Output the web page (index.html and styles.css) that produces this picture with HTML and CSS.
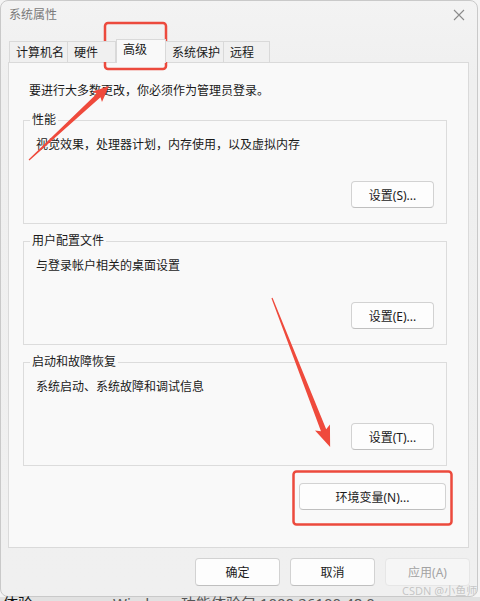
FILE: index.html
```html
<!DOCTYPE html>
<html lang="zh-CN">
<head>
  <meta charset="UTF-8">
  <title>系统属性</title>
  <link rel="stylesheet" href="styles.css">
</head>
<body>
  <div class="window">
    <div class="titlebar">
      <span class="title">系统属性</span>
      <svg class="close" width="12" height="12" viewBox="0 0 12 12">
        <path d="M1 1 L11 11 M11 1 L1 11" stroke="#8a8a8a" stroke-width="1.1" fill="none"/>
      </svg>
    </div>

    <div class="tabs">
      <div class="tab w59">计算机名</div>
      <div class="tab w48">硬件</div>
      <div class="tab active w50">高级</div>
      <div class="tab w58">系统保护</div>
      <div class="tab w46">远程</div>
    </div>

    <div class="panel">
      <p class="intro">要进行大多数更改，你必须作为管理员登录。</p>

      <fieldset class="group">
        <legend>性能</legend>
        <p>视觉效果，处理器计划，内存使用，以及虚拟内存</p>
        <div class="row"><button class="btn">设置(S)...</button></div>
      </fieldset>

      <fieldset class="group">
        <legend>用户配置文件</legend>
        <p>与登录帐户相关的桌面设置</p>
        <div class="row"><button class="btn">设置(E)...</button></div>
      </fieldset>

      <fieldset class="group">
        <legend>启动和故障恢复</legend>
        <p>系统启动、系统故障和调试信息</p>
        <div class="row"><button class="btn">设置(T)...</button></div>
      </fieldset>

      <div class="row env"><button class="btn wide">环境变量(N)...</button></div>
    </div>

    <div class="actions">
      <button class="btn action">确定</button>
      <button class="btn action">取消</button>
      <button class="btn action" disabled>应用(A)</button>
    </div>

    <span class="watermark">CSDN @小鱼师傅</span>
  </div>

  <div class="behind">
    <span class="behind-label">体验</span>
    <span class="behind-value">Windows 功能体验包 1000.26100.48.0</span>
  </div>

  <!-- annotations drawn over the screenshot -->
  <svg class="marks" width="480" height="601" viewBox="0 0 480 601">
    <rect x="105" y="23" width="61" height="46" rx="3" fill="none" stroke="#ec4a3d" stroke-width="2.5"/>
    <rect x="293.5" y="471.5" width="158" height="53" rx="3" fill="none" stroke="#ec4a3d" stroke-width="2.5"/>
    <g transform="translate(29 160) rotate(-42.8)" fill="#ef4a3c">
      <polygon points="0,-0.6 95,-2.6 93,-7 109,0 93,7 95,2.6 0,0.6"/>
    </g>
    <g transform="translate(272 298) rotate(68.7)" fill="#ef4a3c">
      <polygon points="0,-0.6 142,-2.8 139,-8 160,0 139,8 142,2.8 0,0.6"/>
    </g>
  </svg>
</body>
</html>
```

FILE: styles.css
```css
body {
  margin: 0;
  width: 480px;
  height: 601px;
  overflow: hidden;
  position: relative;
  background: #f4f4f4;
  font-family: 'Noto Sans', 'Noto Sans CJK SC', sans-serif;
  font-size: 12px;
  color: #1a1a1a;
}

.window {
  position: relative;
  width: 478px;
  height: 597px;
  box-sizing: border-box;
  border: 1px solid #c9c9c9;
  border-radius: 8px;
  background: linear-gradient(#f3f3f3, #efefef 80px, #f0f0f0);
  overflow: hidden;
}

.titlebar {
  height: 38px;
  display: flex;
  justify-content: space-between;
  padding: 6px 12px 0 8px;
  box-sizing: border-box;
}

.title {
  line-height: 16px;
  color: #7a7a7a;
}

.close {
  margin-top: 2px;
}

.tabs {
  display: flex;
  align-items: flex-start;
  height: 24px;
  margin-bottom: -1px;
  padding-left: 8px;
  position: relative;
  z-index: 1;
}

.tab {
  height: 21px;
  margin-top: 2px;
  box-sizing: border-box;
  border: 1px solid #d9d9d9;
  border-bottom: none;
  background: #f0f0f0;
  padding-left: 6px;
  line-height: 21px;
  white-space: nowrap;
}

.tab + .tab {
  border-left: none;
}

.tab.active {
  height: 24px;
  margin-top: 0;
  background: #f9f9f9;
  border-left: 1px solid #d9d9d9;
  line-height: 20px;
  padding-left: 6px;
}

.w59 { width: 59px; }
.w48 { width: 48px; }
.w50 { width: 50px; }
.w58 { width: 58px; }
.w46 { width: 46px; }

.panel {
  margin: 0 8px 0 7px;
  border: 1px solid #dadada;
  background: #f9f9f9;
  padding: 20px 21px 37px 14px;
}

.intro {
  margin: 0 0 13px 6px;
  line-height: 16px;
}

.group {
  margin: 0 0 9px 0;
  padding: 9px 12px 15px 6px;
  border: 1px solid #dcdcdc;
  min-width: 0;
}

.group legend {
  padding: 0 2px;
  line-height: 16px;
}

.group p {
  margin: 0 0 28px 6px;
  line-height: 16px;
}

.row {
  display: flex;
  justify-content: flex-end;
}

.btn {
  height: 27px;
  width: 83px;
  box-sizing: border-box;
  border: 1px solid #d2d2d2;
  border-bottom-color: #bfbfbf;
  border-radius: 4px;
  background: #fdfdfd;
  font-family: inherit;
  font-size: 12px;
  color: #1a1a1a;
  padding: 0;
}

.env {
  margin-top: 17px;
  padding-right: 1px;
}

.btn.wide {
  width: 147px;
}

.actions {
  display: flex;
  justify-content: flex-end;
  gap: 10px;
  margin-top: 10px;
  padding-right: 7px;
}

.btn.action {
  width: 85px;
  height: 28px;
}

.btn[disabled] {
  background: #f6f6f6;
  border-color: #e6e6e6;
  color: #a3a3a3;
}

.watermark {
  position: absolute;
  left: 401px;
  top: 581px;
  font-size: 11px;
  color: rgba(160, 160, 160, 0.55);
  white-space: nowrap;
}

.behind {
  height: 4px;
  background: #e1e1e1;
  position: relative;
}

.behind-label,
.behind-value {
  position: absolute;
  top: -3px;
  font-size: 15px;
  line-height: 18px;
  white-space: nowrap;
}

.behind-label {
  left: 3px;
  color: #111;
}

.behind-value {
  left: 113px;
  color: #555;
}

.marks {
  position: absolute;
  left: 0;
  top: 0;
  pointer-events: none;
}
```
